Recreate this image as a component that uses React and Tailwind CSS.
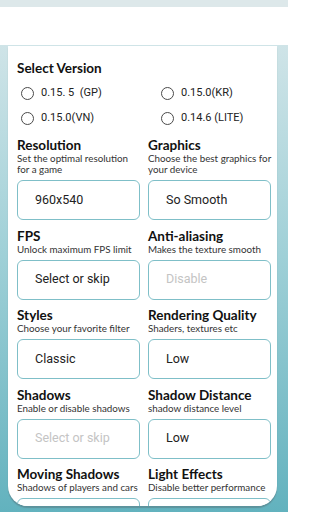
import React from 'react';

const versions = [
    ['0.15. 5  (GP)', '0.15.0(KR)'],
    ['0.15.0(VN)', '0.14.6 (LITE)'],
];

const fields = [
    { title: 'Resolution', hint: 'Set the optimal resolution for a game', value: '960x540' },
    { title: 'Graphics', hint: 'Choose the best graphics for your device', value: 'So Smooth' },
    { title: 'FPS', hint: 'Unlock maximum FPS limit', value: 'Select or skip' },
    { title: 'Anti-aliasing', hint: 'Makes the texture smooth', value: 'Disable', muted: true },
    { title: 'Styles', hint: 'Choose your favorite filter', value: 'Classic' },
    { title: 'Rendering Quality', hint: 'Shaders, textures etc', value: 'Low' },
    { title: 'Shadows', hint: 'Enable or disable shadows', value: 'Select or skip', muted: true },
    { title: 'Shadow Distance', hint: 'shadow distance level', value: 'Low' },
    { title: 'Moving Shadows', hint: 'Shadows of players and cars', value: '' },
    { title: 'Light Effects', hint: 'Disable better performance', value: '' },
];

const Radio = ({ label }) => (
    <label className="flex items-center gap-[7px] h-[25px]">
        <span className="w-[13px] h-[13px] rounded-full border-[1.5px] border-[#4a4a4a]" />
        <span className="text-[11px] text-[#222] whitespace-pre font-['Roboto',sans-serif]">{label}</span>
    </label>
);

const Field = ({ title, hint, value, muted }) => (
    <div className="flex flex-col pb-[8.5px]">
        <h3 className="text-[13.5px] leading-[15px] font-bold text-[#111] whitespace-nowrap font-['Lato',sans-serif]">{title}</h3>
        <p className="text-[9.8px] leading-[11px] text-[#333] font-['Lato',sans-serif]">{hint}</p>
        <div className="mt-[5px] h-[40px] rounded-[6px] border border-[#7fbfc8] flex items-center pl-[17px] bg-white">
            <span className={`text-[12.5px] font-['Roboto',sans-serif] ${muted ? 'text-[#c4c4c4]' : 'text-[#222]'}`}>{value}</span>
        </div>
    </div>
);

export default function App() {
    return (
        <div className="w-[288px] h-[512px] overflow-hidden flex flex-col bg-linear-to-b from-[#d9e8eb] via-[#9fd0d7] to-[#62b2be]">
            <div className="h-[7px] bg-[#dde8ea]" />
            <div className="h-[38px] bg-white" />
            <div className="mt-[1px] ml-[8px] mr-[11px] h-[460px] shrink-0 bg-white rounded-b-[20px] overflow-hidden shadow-[0_2px_1px_rgba(80,90,95,0.35)] flex flex-col">
                <div className="h-[4px] bg-linear-to-r from-[#2b8e9b] via-[#8cc3cb] to-[#d8eaed]" />
                <div className="pl-[9px] pr-[6px] pt-[15px]">
                    <h2 className="text-[13.5px] leading-[15px] font-bold text-[#111] font-['Lato',sans-serif]">Select Version</h2>
                    <div className="mt-[5px] grid grid-cols-[140px_1fr] pl-[4px]">
                        {versions.map(row => row.map(v => <Radio key={v} label={v} />))}
                    </div>
                    <div className="mt-[7px] grid grid-cols-2 gap-x-[8px]">
                        {fields.map(f => <Field key={f.title} {...f} />)}
                    </div>
                </div>
            </div>
        </div>
    );
}
